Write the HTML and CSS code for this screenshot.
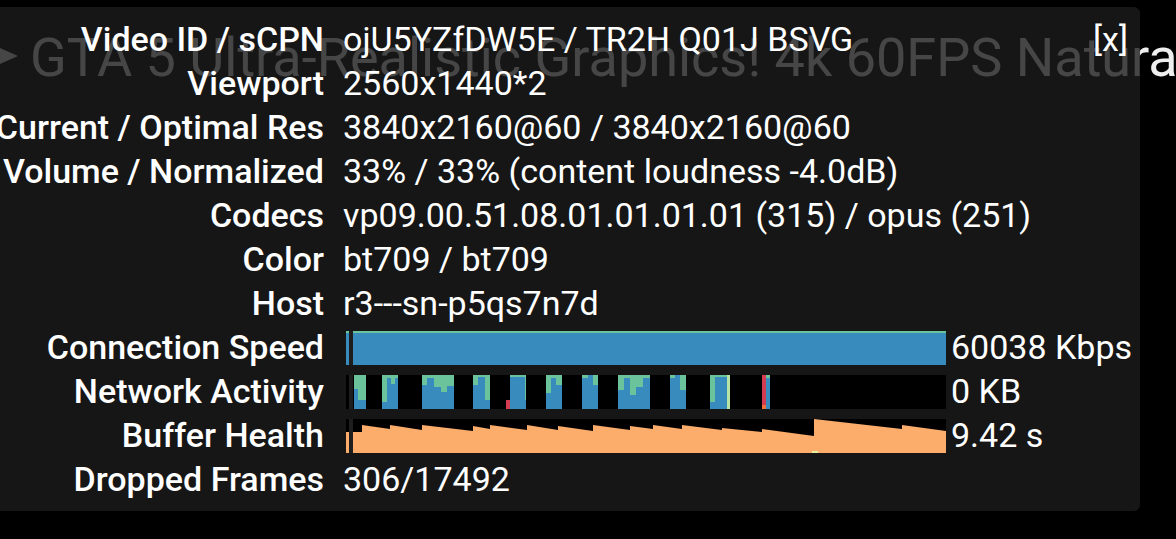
FILE: index.html
```html
<!DOCTYPE html>
<html>
<head>
<meta charset="utf-8">
<link rel="stylesheet" href="styles.css">
</head>
<body>
<div class="player">
  <div class="title">
    <svg class="play" width="18" height="16" viewBox="0 0 18 16"><polygon points="0,0 18,8 0,16" fill="#eeeeee"/></svg>
    <span class="title-text">GTA 5 Ultra-Realistic Graphics! 4k 60FPS Natura</span>
  </div>
  <div class="stats">
    <div class="close">[x]</div>
    <div class="label">Video ID / sCPN</div><div class="value">ojU5YZfDW5E / TR2H Q01J BSVG</div>
    <div class="label">Viewport</div><div class="value">2560x1440*2</div>
    <div class="label">Current / Optimal Res</div><div class="value">3840x2160@60 / 3840x2160@60</div>
    <div class="label">Volume / Normalized</div><div class="value">33% / 33% (content loudness -4.0dB)</div>
    <div class="label">Codecs</div><div class="value">vp09.00.51.08.01.01.01.01 (315) / opus (251)</div>
    <div class="label">Color</div><div class="value">bt709 / bt709</div>
    <div class="label">Host</div><div class="value">r3---sn-p5qs7n7d</div>
    <div class="label">Connection Speed</div>
    <div class="value graph">
      <svg class="bar" width="600" height="34" viewBox="0 0 600 34">
        <rect width="600" height="34" fill="#388bbd"/>
        <rect width="600" height="2" fill="#6ac39b"/>
        <rect x="3" width="4" height="34" fill="#1e1e1e"/>
      </svg>
      <span>60038 Kbps</span>
    </div>
    <div class="label">Network Activity</div>
    <div class="value graph">
      <svg class="bar" width="600" height="34" viewBox="0 0 600 34">
        <rect width="600" height="34" fill="#000"/>
        <rect x="3" width="4" height="34" fill="#1e1e1e"/>
        <g fill="#388bbd">
          <rect x="8" width="12" height="34"/>
          <rect x="36" width="16" height="34"/>
          <rect x="76" width="32" height="34"/>
          <rect x="127" width="17" height="34"/>
          <rect x="164" width="16" height="34"/>
          <rect x="200" width="16" height="34"/>
          <rect x="236" width="16" height="34"/>
          <rect x="272" width="32" height="34"/>
          <rect x="324" width="16" height="34"/>
          <rect x="364" width="20" height="34"/>
          <rect x="420" width="4" height="34"/>
        </g>
        <g fill="#6ac39b">
          <rect x="8" width="4" height="14"/>
          <rect x="12" width="8" height="25"/>
          <rect x="36" width="5" height="27"/>
          <rect x="41" width="11" height="3"/>
          <rect x="45" width="4" height="9"/>
          <rect x="76" width="5" height="10"/>
          <rect x="81" width="14" height="3"/>
          <rect x="88" width="7" height="12"/>
          <rect x="95" width="6" height="17"/>
          <rect x="101" width="7" height="11"/>
          <rect x="127" width="5" height="10"/>
          <rect x="132" width="7" height="2"/>
          <rect x="139" width="5" height="25"/>
          <rect x="164" width="16" height="2"/>
          <rect x="179" width="1" height="25"/>
          <rect x="200" width="5" height="18"/>
          <rect x="205" width="5" height="3"/>
          <rect x="210" width="6" height="10"/>
          <rect x="236" width="6" height="3"/>
          <rect x="247" width="5" height="10"/>
          <rect x="272" width="6" height="15"/>
          <rect x="278" width="6" height="3"/>
          <rect x="284" width="6" height="20"/>
          <rect x="290" width="7" height="12"/>
          <rect x="297" width="7" height="3"/>
          <rect x="324" width="5" height="3"/>
          <rect x="334" width="6" height="15"/>
          <rect x="364" width="5" height="27"/>
          <rect x="369" width="12" height="2"/>
          <rect x="420" width="4" height="3"/>
        </g>
        <rect x="381" width="3" height="34" fill="#b7e3a3"/>
        <rect x="160" y="25" width="4" height="9" fill="#d43d51"/>
        <rect x="416" width="4" height="30" fill="#d43d51"/>
        <rect x="416" y="30" width="4" height="4" fill="#f0703a"/>
      </svg>
      <span>0 KB</span>
    </div>
    <div class="label">Buffer Health</div>
    <div class="value graph">
      <svg class="bar" width="600" height="34" viewBox="0 0 600 34">
        <rect width="600" height="34" fill="#000"/>
        <polygon fill="#fcad6b" points="0,13 16,13 16,6 44,10 44,6 76,11 76,6 127,12 127,7 144,10 144,6 181,11 181,6 212,11 212,7 247,12 247,6 284,11 284,7 307,10 307,6 336,10 336,6 376,11 376,9 416,13 416,10 468,17 468,0 556,10 556,6 600,12 600,34 0,34"/>
        <rect x="3" width="4" height="34" fill="#1e1e1e"/>
        <rect x="466" y="32" width="6" height="2" fill="#e8f0a0"/>
      </svg>
      <span>9.42 s</span>
    </div>
    <div class="label">Dropped Frames</div><div class="value">306/17492</div>
  </div>
</div>
</body>
</html>
```
FILE: styles.css
```css
html, body {
  margin: 0;
  padding: 0;
  background: #000;
  overflow: hidden;
}
.player {
  position: relative;
  width: 1176px;
  height: 539px;
  font-family: Roboto, "Noto Sans", sans-serif;
}
.title {
  display: flex;
  align-items: flex-start;
  padding-top: 31px;
  color: #eeeeee;
  font-size: 54px;
  line-height: 54px;
  white-space: nowrap;
}
.play {
  margin-top: 17px;
  margin-right: 12px;
  flex: none;
}
.stats {
  position: absolute;
  left: -40px;
  top: 7px;
  width: 1180px;
  height: 504px;
  box-sizing: border-box;
  padding-top: 10px;
  background: rgba(28, 28, 28, 0.8);
  border-radius: 6px;
  display: grid;
  grid-template-columns: 364px 1fr;
  grid-auto-rows: 44px;
  column-gap: 19px;
  align-content: start;
  color: #fff;
  font-size: 34px;
  line-height: 44px;
  white-space: nowrap;
}
.label {
  text-align: right;
  font-weight: 500;
}
.value {
  font-weight: 400;
}
.graph {
  display: flex;
  align-items: flex-start;
  gap: 5px;
}
.bar {
  display: block;
  flex: none;
  margin-left: 3px;
  margin-top: 6px;
}
.close {
  position: absolute;
  top: 10px;
  right: 12px;
  font-weight: 400;
}
```
